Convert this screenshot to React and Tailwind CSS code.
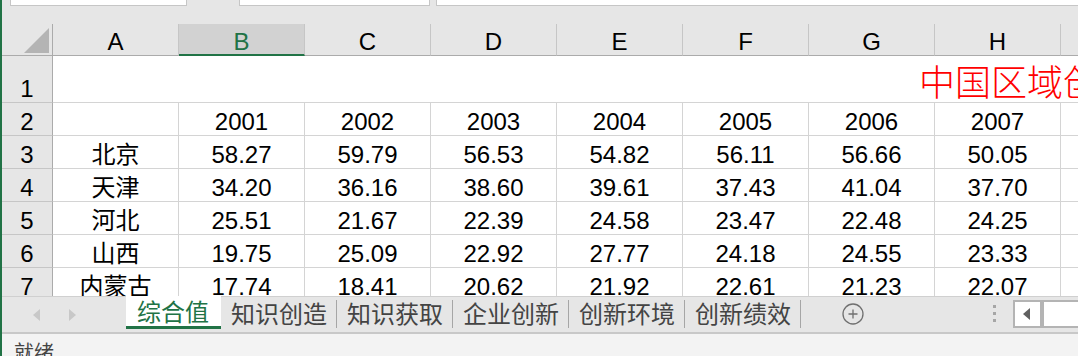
import React from "react";

const cols = ["A", "B", "C", "D", "E", "F", "G", "H"];
const years = ["2001", "2002", "2003", "2004", "2005", "2006", "2007"];
const rows = [
  ["北京", "58.27", "59.79", "56.53", "54.82", "56.11", "56.66", "50.05"],
  ["天津", "34.20", "36.16", "38.60", "39.61", "37.43", "41.04", "37.70"],
  ["河北", "25.51", "21.67", "22.39", "24.58", "23.47", "22.48", "24.25"],
  ["山西", "19.75", "25.09", "22.92", "27.77", "24.18", "24.55", "23.33"],
  ["内蒙古", "17.74", "18.41", "20.62", "21.92", "22.61", "21.23", "22.07"],
];
const sheets = ["知识创造", "知识获取", "企业创新", "创新环境", "创新绩效"];

const latin = { fontFamily: '"Liberation Sans", "Noto Sans CJK SC", sans-serif' };
const cjk = { fontFamily: '"Noto Sans CJK SC", "Liberation Sans", sans-serif' };

const RowHead = ({ n, h }) => (
  <div
    className={`${h} w-[51px] shrink-0 bg-[#e6e6e6] border-r border-r-[#ababab] border-b border-b-[#c6c6c6] flex items-end justify-center pb-[1px] text-[24px] leading-[24px] text-black`}
  >
    {n}
  </div>
);

const Cell = ({ children }) => (
  <div className="w-[126px] shrink-0 border-r border-b border-[#d4d4d4] flex items-end justify-center pb-[1px] text-[24px] leading-[24px] text-black whitespace-nowrap">
    {children}
  </div>
);

export default function App() {
  return (
    <div className="w-[1078px] h-[356px] overflow-hidden flex bg-white" style={latin}>
      <div className="w-[2px] shrink-0 bg-[#217346]" />
      <div className="flex-1 min-w-0 flex flex-col">
        {/* formula bar remnant */}
        <div className="h-[24px] shrink-0 bg-[#e6e6e6] flex items-start">
          <div className="ml-[8px] w-[177px] h-[6px] bg-white border-x border-b border-[#c6c6c6]" />
          <div className="ml-[52px] w-[191px] h-[6px] bg-white border-x border-b border-[#c6c6c6]" />
          <div className="ml-[6px] flex-1 h-[6px] bg-white border-l border-b border-[#c6c6c6]" />
        </div>

        {/* grid */}
        <div className="h-[272px] shrink-0 overflow-hidden flex flex-col">
          <div className="h-[32px] shrink-0 flex bg-[#e6e6e6]">
            <div className="w-[51px] shrink-0 border-r border-b border-[#ababab] flex items-end justify-end pr-[3px] pb-[2px]">
              <svg width="25" height="25" viewBox="0 0 25 25">
                <polygon points="25,0 25,25 0,25" fill="#b4b4b4" />
              </svg>
            </div>
            {cols.map((c) =>
              c === "B" ? (
                <div
                  key={c}
                  className="w-[126px] shrink-0 flex items-end justify-center bg-[#d2d2d2] text-[#217346] border-r border-r-[#c6c6c6] border-b-2 border-b-[#217346] text-[24px] leading-[24px]"
                >
                  {c}
                </div>
              ) : (
                <div
                  key={c}
                  className="w-[126px] shrink-0 flex items-end justify-center pb-[1px] text-black border-r border-r-[#c6c6c6] border-b border-b-[#ababab] text-[24px] leading-[24px]"
                >
                  {c}
                </div>
              )
            )}
            <div className="flex-1 border-b border-b-[#ababab]" />
          </div>

          <div className="flex shrink-0">
            <RowHead n="1" h="h-[47px]" />
            <div className="flex-1 h-[47px] border-b border-[#d4d4d4] flex items-end pl-[866px] pb-[4px] overflow-hidden">
              <span className="text-[36px] leading-[36px] text-[#ff0000] font-light whitespace-nowrap tracking-[0px]" style={cjk}>
                中国区域创新能力
              </span>
            </div>
          </div>

          <div className="flex shrink-0">
            <RowHead n="2" h="h-[33px]" />
            <Cell />
            {years.map((y) => (
              <Cell key={y}>{y}</Cell>
            ))}
            <div className="flex-1 border-b border-[#d4d4d4]" />
          </div>

          {rows.map((r, i) => (
            <div key={i} className="flex shrink-0">
              <RowHead n={String(i + 3)} h="h-[33px]" />
              {r.map((v, j) => (
                <Cell key={j}>{v}</Cell>
              ))}
              <div className="flex-1 border-b border-[#d4d4d4]" />
            </div>
          ))}
        </div>

        {/* sheet tabs */}
        <div className="h-[38px] shrink-0 bg-[#e6e6e6] border-t border-[#d0d0d0] border-b-2 border-b-[#c8c8c8] flex items-start" style={cjk}>
          <div className="w-[124px] h-[36px] shrink-0 flex items-center">
            <svg className="ml-[31px]" width="7" height="12" viewBox="0 0 7 12">
              <polygon points="7,0 7,12 0,6" fill="#c8c8c8" />
            </svg>
            <svg className="ml-[29px]" width="7" height="12" viewBox="0 0 7 12">
              <polygon points="0,0 0,12 7,6" fill="#c8c8c8" />
            </svg>
          </div>
          <div className="-mt-px w-[95px] h-[33px] shrink-0 bg-white border-b-[3px] border-[#217346] flex items-center pl-[11px] text-[24px] leading-[26px] text-[#217346]">
            综合值
          </div>
          {sheets.map((s) => (
            <div key={s} className="flex items-center h-[36px] shrink-0">
              <div className="pl-[10px] pr-[9px] text-[24px] leading-[26px] text-[#444444] pb-[4px] whitespace-nowrap">{s}</div>
              <div className="w-px h-[28px] bg-[#a6a6a6] mb-[3px]" />
            </div>
          ))}
          <div className="ml-[41px] h-[36px] flex items-center shrink-0">
            <svg width="22" height="22" viewBox="0 0 22 22" className="mb-[2px]">
              <circle cx="11" cy="11" r="10" fill="none" stroke="#707070" strokeWidth="1.3" />
              <path d="M11 6.5v9M6.5 11h9" stroke="#707070" strokeWidth="1.3" />
            </svg>
          </div>
          <div className="ml-[129px] h-[36px] flex flex-col justify-center gap-[4px] shrink-0 pb-[4px]">
            <div className="w-[3px] h-[3px] bg-[#a6a6a6]" />
            <div className="w-[3px] h-[3px] bg-[#a6a6a6]" />
            <div className="w-[3px] h-[3px] bg-[#a6a6a6]" />
          </div>
          <div className="ml-[17px] mt-[3px] w-[80px] h-[28px] shrink-0 bg-white border-2 border-[#b4b4b4] flex items-center">
            <svg className="ml-[8px]" width="7" height="12" viewBox="0 0 7 12">
              <polygon points="7,0 7,12 0,6" fill="#606060" />
            </svg>
            <div className="ml-[10px] w-[4px] h-full bg-[#b4b4b4]" />
          </div>
        </div>

        {/* status bar */}
        <div className="flex-1 bg-[#f3f3f3] pl-[12px] pt-[6px] text-[20px] leading-[24px] text-[#444444]" style={cjk}>
          就绪
        </div>
      </div>
    </div>
  );
}
